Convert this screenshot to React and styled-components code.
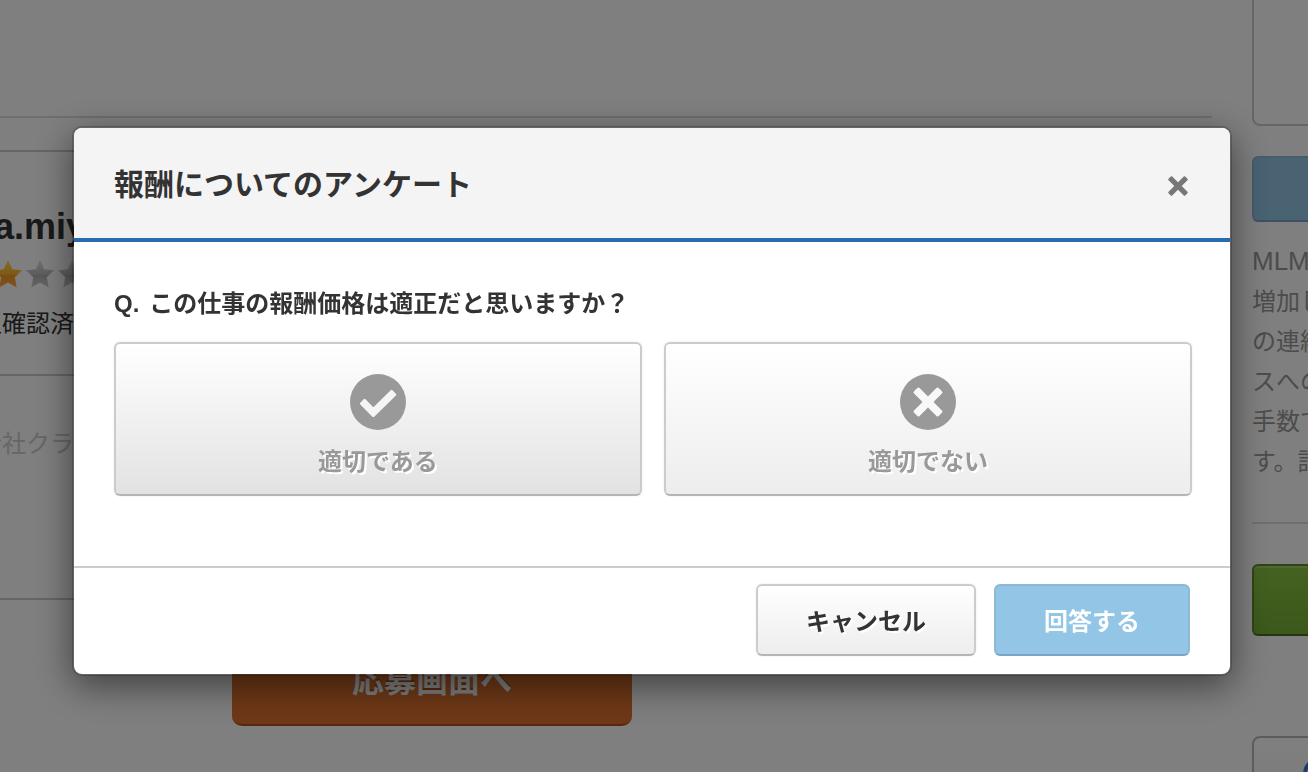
import React, { useState } from 'react';
import styled, { createGlobalStyle, css } from 'styled-components';

const GlobalStyle = createGlobalStyle`
  * {
    box-sizing: border-box;
  }

  body {
    margin: 0;
    overflow: hidden;
    color: #333;
    background: #fff;
    font-family: "Liberation Sans", "Noto Sans CJK JP", sans-serif;
    font-size: 24px;
    line-height: 36px;
  }

  h1, h2, p {
    margin: 0;
  }

  button {
    font-family: inherit;
    cursor: pointer;
  }
`;

/* ---- page behind the dialog ---- */

const Page = styled.div`
  display: flex;
  gap: 40px;
  height: 100vh;
  overflow: hidden;
`;

const Main = styled.main`
  flex: 0 0 calc(100% - 96px);
  padding-top: 116px;
`;

const Rule = styled.hr`
  height: 2px;
  margin: 0;
  border: 0;
  background: #ddd;
`;

const ClientCard = styled.section`
  width: 60%;
  margin-top: 32px;
  border: 2px solid #ccc;
  border-left: 0;
`;

const CardSection = styled.div`
  padding: 48px 0 32px;

  & + & {
    min-height: 224px;
    padding-top: 50px;
    border-top: 2px solid #ccc;
  }
`;

const CardContent = styled.div`
  margin-left: -22px;
`;

const ClientName = styled.h2`
  padding-left: 16px;
  font-size: 36px;
  line-height: 54px;
`;

const Stars = styled.div`
  display: flex;
  gap: 4px;
  height: 28px;
  margin: 6px 0 18px;
  padding-left: 16px;
`;

const Meta = styled.p`
  color: ${props => props.$muted ? '#ccc' : '#333'};
  white-space: nowrap;
`;

const ApplyButton = styled.button`
  display: block;
  width: 400px;
  height: 88px;
  margin: 38px 0 0 232px;
  padding: 0;
  border: 0;
  border-bottom: 2px solid #b0521c;
  border-radius: 10px;
  background: #de722f;
  color: #fff;
  font-size: 32px;
  font-weight: bold;
  line-height: 76px;
  text-shadow: 0 -2px 0 #b0521c;
`;

const Sidebar = styled.aside`
  flex: 0 0 480px;
`;

const Panel = styled.div`
  height: 126px;
  border: 2px solid #ccc;
  border-top: 0;
  border-radius: 0 0 8px 8px;
`;

const SideButton = styled.button`
  display: block;
  width: 100%;
  border-radius: 6px;

  ${props => props.$green ? css`
    height: 72px;
    margin-top: 40px;
    border: 2px solid #5f8a2a;
    border-bottom-color: #4a6c1e;
    background: linear-gradient(#8ac443, #78b035);
    box-shadow: inset 0 2px 0 #a0d062;
  ` : css`
    height: 66px;
    margin-top: 30px;
    border: 2px solid #8dbad8;
    border-bottom-color: #7aa3c4;
    background: #93c6e6;
  `}
`;

const Notice = styled.p`
  margin: 20px 0 40px;
  color: #999;
  line-height: 40px;
  white-space: nowrap;
`;

const Term = styled.span`
  font-size: 26px;
  line-height: 26px;
`;

const SharePanel = styled.div`
  height: 120px;
  margin-top: 100px;
  padding: 18px 48px;
  border: 2px solid #b8b8b8;
  border-radius: 8px;
  background: linear-gradient(#fff, #eee);
`;

/* ---- dialog ---- */

const Backdrop = styled.div`
  position: fixed;
  inset: 0;
  padding: 126px 76px 0 72px;
  background: rgba(0, 0, 0, 0.5);
`;

const Dialog = styled.div`
  border: 2px solid rgba(0, 0, 0, 0.2);
  border-radius: 10px;
  background: #fff;
  background-clip: padding-box;
  box-shadow: 0 10px 36px rgba(0, 0, 0, 0.5);
`;

const DialogHeader = styled.header`
  display: flex;
  align-items: center;
  justify-content: space-between;
  height: 114px;
  padding: 4px 40px 0;
  border-bottom: 4px solid #2a6ab2;
  border-radius: 8px 8px 0 0;
  background: #f4f4f4;
`;

const DialogTitle = styled.h1`
  font-size: 30px;
  line-height: 44px;
`;

const CloseButton = styled.button`
  display: flex;
  padding: 0;
  margin-top: 2px;
  border: 0;
  background: none;
`;

const DialogBody = styled.div`
  padding: 44px 38px 70px 40px;
`;

const Question = styled.h2`
  display: flex;
  gap: 10px;
  font-size: 24px;
  line-height: 36px;
`;

const Choices = styled.div`
  display: grid;
  grid-template-columns: 1fr 1fr;
  gap: 22px;
  margin-top: 20px;
`;

const BaseButton = styled.button`
  border: 2px solid #ccc;
  border-bottom-color: #b5b5b5;
  border-radius: 6px;
  background: linear-gradient(#fff, #ededed);
  box-shadow: 0 0 2px rgba(0, 0, 0, 0.1);
  color: #333;
  font-size: 24px;
  font-weight: bold;
  line-height: 36px;
  text-shadow: 2px 2px 0 #fff;
`;

const ChoiceButton = styled(BaseButton)`
  display: flex;
  flex-direction: column;
  align-items: center;
  gap: 14px;
  height: 154px;
  padding: 30px 0 0;
  color: #999;
  ${props => props.$active && css`
    background: linear-gradient(#fff, #e2e2e2);
  `}
`;

const DialogFooter = styled.footer`
  display: flex;
  justify-content: flex-end;
  gap: 18px;
  padding: 16px 40px 18px;
  border-top: 2px solid #ccc;
`;

const CancelButton = styled(BaseButton)`
  height: 72px;
  padding: 4px 48px 0;
`;

const SubmitButton = styled(CancelButton)`
  border-color: #8bb9d8;
  border-bottom-color: #7ba5c6;
  background: #92c5e6;
  box-shadow: none;
  color: #fff;
  text-shadow: none;
`;

const Star = ({ filled }) => (
  <svg width="28" height="28" viewBox="0 0 28 28" aria-hidden="true">
    <defs>
      <linearGradient id={filled ? 'starOn' : 'starOff'} x1="0" y1="0" x2="0" y2="1">
        <stop offset="0" stopColor={filled ? '#ffd84a' : '#e0e0e0'} />
        <stop offset="0.5" stopColor={filled ? '#ffb52e' : '#bdbdbd'} />
        <stop offset="0.56" stopColor={filled ? '#f59a22' : '#b0b0b0'} />
        <stop offset="1" stopColor={filled ? '#ffa63c' : '#d0d0d0'} />
      </linearGradient>
    </defs>
    <path
      d="M14 0l4.2 9.2 9.8 1.1-7.2 7 1.9 10.2L14 22.6l-8.7 4.9 1.9-10.2-7.2-7 9.8-1.1z"
      fill={`url(#${filled ? 'starOn' : 'starOff'})`}
    />
  </svg>
);

const CheckCircle = () => (
  <svg width="56" height="56" viewBox="0 0 56 56" aria-hidden="true">
    <circle cx="28" cy="28" r="28" fill="#999" />
    <path
      d="M11.2 29.6L14.6 26.2 23.3 35.1 41.6 17.2 45 20.6 23.3 41.9z"
      fill="#f5f5f5"
      stroke="#f5f5f5"
      strokeWidth="2.6"
      strokeLinejoin="round"
    />
  </svg>
);

const CrossCircle = () => (
  <svg width="56" height="56" viewBox="0 0 56 56" aria-hidden="true">
    <circle cx="28" cy="28" r="28" fill="#999" />
    <g fill="#f8f8f8">
      <rect x="10.6" y="24.1" width="34.8" height="7.8" rx="1.6" transform="rotate(45 28 28)" />
      <rect x="10.6" y="24.1" width="34.8" height="7.8" rx="1.6" transform="rotate(-45 28 28)" />
    </g>
  </svg>
);

const Cross = () => (
  <svg width="24" height="24" viewBox="0 0 24 24" aria-hidden="true">
    <g fill="#777">
      <rect x="0.2" y="9.4" width="23.6" height="5.2" rx="1" transform="rotate(45 12 12)" />
      <rect x="0.2" y="9.4" width="23.6" height="5.2" rx="1" transform="rotate(-45 12 12)" />
    </g>
  </svg>
);

const SurveyDialog = () => {
  const [answer, setAnswer] = useState('yes');

  return (
    <Backdrop>
      <Dialog role="dialog" aria-modal="true" aria-labelledby="survey-title">
        <DialogHeader>
          <DialogTitle id="survey-title">報酬についてのアンケート</DialogTitle>
          <CloseButton type="button" aria-label="閉じる"><Cross /></CloseButton>
        </DialogHeader>
        <DialogBody>
          <Question>
            <span>Q.</span>
            <span>この仕事の報酬価格は適正だと思いますか？</span>
          </Question>
          <Choices>
            <ChoiceButton type="button" $active={answer === 'yes'} onClick={() => setAnswer('yes')}>
              <CheckCircle />
              適切である
            </ChoiceButton>
            <ChoiceButton type="button" $active={answer === 'no'} onClick={() => setAnswer('no')}>
              <CrossCircle />
              適切でない
            </ChoiceButton>
          </Choices>
        </DialogBody>
        <DialogFooter>
          <CancelButton type="button">キャンセル</CancelButton>
          <SubmitButton type="button">回答する</SubmitButton>
        </DialogFooter>
      </Dialog>
    </Backdrop>
  );
};

const App = () => (
  <>
    <GlobalStyle />
    <Page>
      <Main>
        <Rule />
        <ClientCard>
          <CardSection>
            <CardContent>
              <ClientName>a.miy</ClientName>
              <Stars>
                <Star filled />
                <Star />
                <Star />
              </Stars>
              <Meta>人確認済</Meta>
            </CardContent>
          </CardSection>
          <CardSection>
            <CardContent>
              <Meta $muted>会社クラ</Meta>
            </CardContent>
          </CardSection>
        </ClientCard>
        <ApplyButton type="button">応募画面へ</ApplyButton>
      </Main>
      <Sidebar>
        <Panel />
        <SideButton type="button" aria-label="相談" />
        <Notice>
          <Term>MLM</Term><br />
          増加し<br />
          の連絡<br />
          スへの<br />
          手数で<br />
          す。詐
        </Notice>
        <Rule />
        <SideButton type="button" $green aria-label="応募" />
        <SharePanel>
          <svg width="36" height="36" viewBox="0 0 36 36" aria-hidden="true">
            <circle cx="18" cy="18" r="15" fill="#fff" stroke="#3a78d8" strokeWidth="4" />
          </svg>
        </SharePanel>
      </Sidebar>
    </Page>
    <SurveyDialog />
  </>
);

export default App;
